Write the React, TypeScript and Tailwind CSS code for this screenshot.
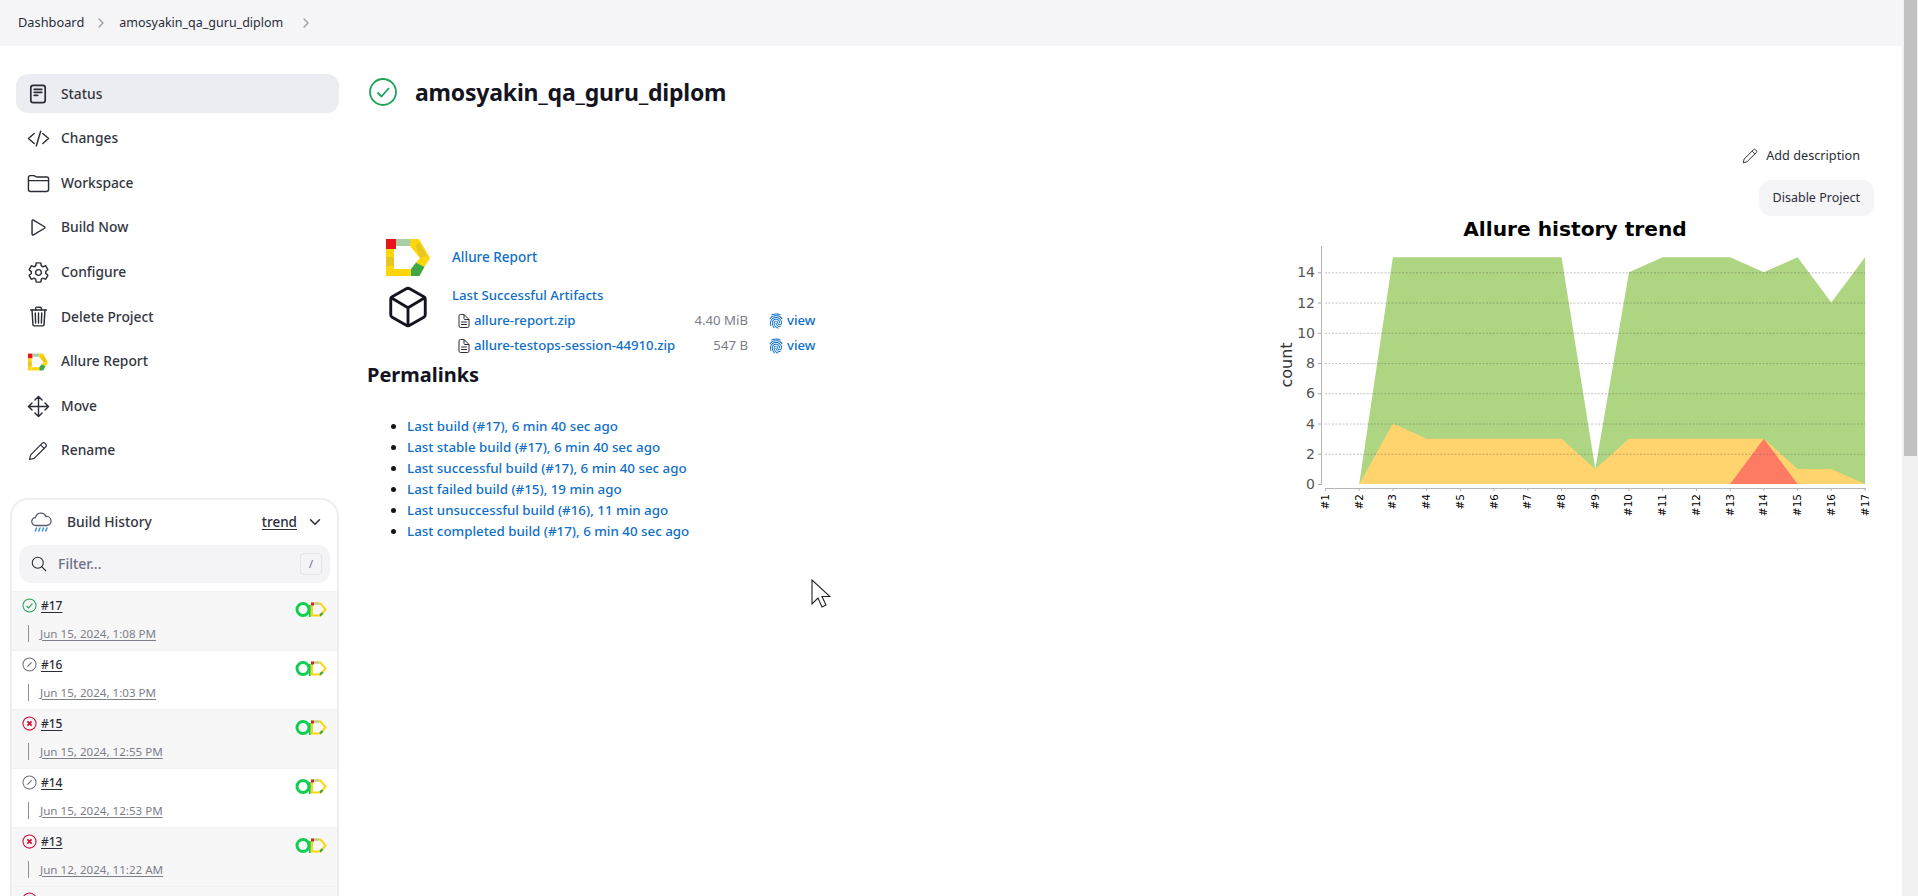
import {
  IoChevronDownOutline,
  IoChevronForwardOutline,
  IoCodeSlashOutline,
  IoCubeOutline,
  IoDocumentTextOutline,
  IoFingerPrint,
  IoFolderOutline,
  IoMoveOutline,
  IoPlayOutline,
  IoSearchOutline,
  IoSettingsOutline,
  IoTrashOutline,
} from 'react-icons/io5';

function StatusDoc() {
  return (
    <svg viewBox="0 0 20 20" className="w-5 h-5 shrink-0" fill="none" stroke="#2a2c37" strokeWidth="1.7" strokeLinecap="round">
      <rect x="2.8" y="1.300" width="14.400" height="17.400" rx="2.400" />
      <path d="M6.200 5.300h7.600M6.200 8.300h7.600M6.200 11.300h3.500" />
    </svg>
  );
}

function Pencil({ className }: { className: string }) {
  return (
    <svg viewBox="0 0 20 20" className={className} fill="none" stroke="#2a2c37" strokeWidth="1.200" strokeLinejoin="round">
      <path d="M1.500 18.500l1.200-4.700L14.300 2.200a1.800 1.800 0 012.600 0l.9.9a1.800 1.800 0 010 2.600L6.200 17.300z" />
      <path d="M12.600 3.900l3.500 3.500" />
    </svg>
  );
}

function AllureLogo({ className }: { className: string }) {
  return (
    <svg viewBox="0 0 44 37" className={className}>
      <path d="M0 10h8v27H0z" fill="#ffd60a" />
      <path d="M0 18h8v9H0z" fill="#e6c620" />
      <path d="M0 0h10v10H0z" fill="#e8141c" />
      <path d="M10 0h15v7H10z" fill="#a9cfa6" />
      <path d="M25 0h8l11 19H34L24 7z" fill="#ffd60a" />
      <path d="M29.500 6l4-2 7.500 13-7 2z" fill="#e6c620" />
      <path d="M34 19h10l-5.500 9-8.500-4.500z" fill="#ffd60a" />
      <path d="M8 30h17v7H8z" fill="#ffd60a" />
      <path d="M30 23.500l8.500 4.500-5 9H25v-7z" fill="#3fa845" />
    </svg>
  );
}

function QaBadge() {
  return (
    <svg viewBox="0 0 32 17" className="w-8 h-[17px]">
      <circle cx="8" cy="8.500" r="6" fill="none" stroke="#0fcf50" strokeWidth="3" />
      <path d="M14.800 4v12" fill="none" stroke="#0fcf50" strokeWidth="1.800" />
      <path d="M17 2.600h8.500l5 5.900-5 5.900H17z" fill="none" stroke="#ffd60a" strokeWidth="2" />
      <path d="M16 1.500h3v3h-3z" fill="#d9261c" />
      <path d="M19 1.600h5v2h-5z" fill="#a9cfa6" />
      <path d="M25.500 15.400l-1.200-2 2.500-2.200 1.700 1.500z" fill="#3fa845" />
    </svg>
  );
}

function BuildIcon({ state }: { state: string }) {
  if (state === 'ok') {
    return (
      <svg viewBox="0 0 16 16" className="w-[15px] h-[15px] shrink-0" fill="none" stroke="#1ea05a" strokeWidth="1.100">
        <circle cx="8" cy="8" r="7" />
        <path d="M4.800 8.300l2.200 2.200 4.200-4.500" strokeWidth="1.200" />
      </svg>
    );
  }
  if (state === 'fail') {
    return (
      <svg viewBox="0 0 16 16" className="w-[15px] h-[15px] shrink-0" fill="none" stroke="#d0103a" strokeWidth="1.200">
        <circle cx="8" cy="8" r="7" />
        <path d="M5.700 5.700l4.600 4.600M10.300 5.700l-4.600 4.600" strokeWidth="1.800" />
      </svg>
    );
  }
  return (
    <svg viewBox="0 0 16 16" className="w-[15px] h-[15px] shrink-0" fill="none" stroke="#6f7180" strokeWidth="1.100">
      <circle cx="8" cy="8" r="7" />
      <path d="M5.800 10.200l4.400-4.400" strokeWidth="1.300" />
    </svg>
  );
}

const navIcon = 'w-[23px] h-[23px] shrink-0';

const navItems = [
  { label: 'Status', icon: <StatusDoc />, active: true },
  { label: 'Changes', icon: <IoCodeSlashOutline className={navIcon} /> },
  { label: 'Workspace', icon: <IoFolderOutline className={navIcon} /> },
  { label: 'Build Now', icon: <IoPlayOutline className={navIcon} /> },
  { label: 'Configure', icon: <IoSettingsOutline className={navIcon} /> },
  { label: 'Delete Project', icon: <IoTrashOutline className={navIcon} /> },
  { label: 'Allure Report', icon: <AllureLogo className="w-5 h-[18px] shrink-0" /> },
  { label: 'Move', icon: <IoMoveOutline className={navIcon} /> },
  { label: 'Rename', icon: <Pencil className="w-5 h-5 shrink-0" /> },
];

const builds = [
  { num: '#17', state: 'ok', date: 'Jun 15, 2024, 1:08 PM' },
  { num: '#16', state: 'aborted', date: 'Jun 15, 2024, 1:03 PM' },
  { num: '#15', state: 'fail', date: 'Jun 15, 2024, 12:55 PM' },
  { num: '#14', state: 'aborted', date: 'Jun 15, 2024, 12:53 PM' },
  { num: '#13', state: 'fail', date: 'Jun 12, 2024, 11:22 AM' },
];

const permalinks = [
  'Last build (#17), 6 min 40 sec ago',
  'Last stable build (#17), 6 min 40 sec ago',
  'Last successful build (#17), 6 min 40 sec ago',
  'Last failed build (#15), 19 min ago',
  'Last unsuccessful build (#16), 11 min ago',
  'Last completed build (#17), 6 min 40 sec ago',
];

const artifacts = [
  { name: 'allure-report.zip', size: '4.40 MiB' },
  { name: 'allure-testops-session-44910.zip', size: '547 B' },
];

// chart values per build, #1 to #17
const totals = [0, 0, 15, 15, 15, 15, 15, 15, 1, 14, 15, 15, 15, 14, 15, 12, 15];
const yellows = [0, 0, 4, 3, 3, 3, 3, 3, 1, 3, 3, 3, 3, 3, 1, 1, 0];
const cx = (i: number) => 1325.5 + i * 33.72;
const cy = (v: number) => 484 - v * 15.12;
const area = (vals: number[], from: number) =>
  `${cx(from)},${cy(0)} ` + vals.slice(from).map((v, i) => `${cx(i + from)},${cy(v)}`).join(' ') + ` ${cx(16)},${cy(0)}`;

function TrendChart() {
  return (
    <svg viewBox="1270 216 610 320" className="w-[610px] h-[320px]" style={{ fontFamily: '"DejaVu Sans", sans-serif' }}>
      <text x="1575" y="236" textAnchor="middle" fontSize="20.200" fontWeight="700" fill="#000">
        Allure history trend
      </text>
      <polygon points={area(totals, 1)} fill="#aed581" />
      <polygon points={area(yellows, 1)} fill="#ffd36e" />
      <polygon points={`${cx(12)},${cy(0)} ${cx(13)},${cy(3)} ${cx(14)},${cy(0)}`} fill="#fe7b63" />
      {[0, 2, 4, 6, 8, 10, 12, 14].map((v) => (
        <g key={v}>
          {v > 0 && (
            <line x1="1325" x2="1865" y1={cy(v) + 0.5} y2={cy(v) + 0.5} stroke="#555" strokeOpacity="0.35" strokeDasharray="2 1.500" />
          )}
          <line x1="1318" x2="1321" y1={cy(v) + 0.5} y2={cy(v) + 0.5} stroke="#aaa" />
          <text x="1315" y={cy(v) + 5} textAnchor="end" fontSize="14" fill="#555">
            {v}
          </text>
        </g>
      ))}
      <line x1="1321.500" x2="1321.500" y1="246" y2="485" stroke="#b5b5b5" />
      <line x1="1325" x2="1866" y1="488.500" y2="488.500" stroke="#b5b5b5" />
      <text transform="translate(1292 365) rotate(-90)" textAnchor="middle" fontSize="16" fill="#333">
        count
      </text>
      {totals.map((_, i) => (
        <g key={i}>
          <line x1={cx(i)} x2={cx(i)} y1="488" y2="491" stroke="#b5b5b5" />
          <text transform={`translate(${cx(i) + 3.500} 494) rotate(-90)`} textAnchor="end" fontSize="10.500" fill="#000">
            {'#' + (i + 1)}
          </text>
        </g>
      ))}
    </svg>
  );
}

function CursorArrow() {
  return (
    <svg viewBox="0 0 20 30" className="absolute left-[811px] top-[579px] w-5 h-[30px]" fill="#fff" stroke="#222" strokeWidth="1.100">
      <path d="M1 1v24l6-6 4 9 4-2-4-8.500h8z" />
    </svg>
  );
}

export default function App() {
  return (
    <div
      className="relative flex h-[896px] overflow-hidden bg-white text-[14px] text-[#2a2c37]"
      style={{ fontFamily: '"Noto Sans", sans-serif' }}
    >
      <div className="flex flex-col flex-1 min-w-0">
        <header className="h-[46px] bg-[#f5f5f7] flex items-center pl-[18px] text-[12.800px]">
          <span>Dashboard</span>
          <IoChevronForwardOutline className="w-3.5 h-3.5 ml-[10px] mr-[11px] text-[#9a9ba5]" />
          <span className="text-[12.500px]">amosyakin_qa_guru_diplom</span>
          <IoChevronForwardOutline className="w-3.5 h-3.5 ml-[16px] text-[#9a9ba5]" />
        </header>

        <div className="flex flex-1 min-h-0">
          {/* Side panel */}
          <aside className="w-[368px] shrink-0 pt-[28px]">
            <nav className="flex flex-col gap-[5.600px] ml-[16px] w-[323px]">
              {navItems.map((item) => (
                <div
                  key={item.label}
                  className={`flex items-center h-[39px] rounded-[12px] pl-[12px] pt-px gap-[13px] ${item.active ? 'bg-[#ecedf2]' : ''}`}
                >
                  <span className="w-5 flex justify-center">{item.icon}</span>
                  <span className="font-medium text-[13.800px] text-[#34363f]">{item.label}</span>
                </div>
              ))}
            </nav>

            <section className="mt-[28px] ml-[10px] w-[329px] border-2 border-[#eeeef1] rounded-t-[18px] pb-4">
              <div className="flex items-center h-[45px] pl-[17px] pr-[14px]">
                <svg viewBox="0 0 24 24" className="w-[24px] h-[24px]" fill="none" strokeWidth="1.300" strokeLinecap="round">
                  <path d="M7 15.500a4 4 0 01-.5-8 5.500 5.500 0 0110.500-1 4.500 4.500 0 011 9z" stroke="#555a66" fill="#fff" />
                  <path d="M7.500 18l-1.200 3M11 18l-1.200 3M14.500 18l-1.200 3M18 18l-1.200 3" stroke="#3a8fd8" strokeWidth="1.500" />
                </svg>
                <span className="ml-[14px] font-medium text-[13.800px] text-[#34363f]">Build History</span>
                <span className="ml-auto underline underline-offset-2 font-medium text-[13.500px]">trend</span>
                <IoChevronDownOutline className="w-4 h-4 ml-[10px]" />
              </div>
              <div className="mx-[7px] mb-[8px] h-[38px] bg-[#f4f4f7] rounded-[12px] flex items-center pl-[11px] pr-[8px]">
                <IoSearchOutline className="w-[18px] h-[18px]" />
                <span className="ml-[10px] font-medium text-[#6c6f85]">Filter...</span>
                <span className="ml-auto w-[22px] h-[22px] border border-[#e2e2e7] rounded-[4px] flex items-center justify-center text-[11px] text-[#6c6f85]">
                  /
                </span>
              </div>
              {builds.map((b, i) => (
                <div key={b.num} className={`flex justify-between h-[59px] border-t border-[#f2f2f4] ${i % 2 === 0 ? 'bg-[#f7f7f8]' : 'bg-white'}`}>
                  <div>
                    <div className="flex items-center gap-[4px] h-[18px] mt-[5px] pl-[10px] text-[12px]">
                      <BuildIcon state={b.state} />
                      <span className="underline underline-offset-2 font-medium">{b.num}</span>
                    </div>
                    <div className="flex items-center mt-[10px] ml-[16px] h-[17px] border-l border-[#8d8f99] pl-[11px] text-[11.600px] text-[#7c7e88]">
                      <span className="underline underline-offset-2">{b.date}</span>
                    </div>
                  </div>
                  <div className="mt-[9px] mr-[10px]">
                    <QaBadge />
                  </div>
                </div>
              ))}
              <div className="h-[59px] border-t border-[#f2f2f4] bg-[#f7f7f8] pl-[10px] pt-[5px]">
                <BuildIcon state="fail" />
              </div>
            </section>
          </aside>

          {/* Main content */}
          <main className="flex-1 min-w-0 pt-[26px] pr-[22px]">
            <div className="flex items-center h-[39px] gap-[18px]">
              <svg viewBox="0 0 28 28" className="w-7 h-7 ml-px" fill="none" stroke="#1ea35a" strokeWidth="1.800">
                <circle cx="14" cy="14" r="13" />
                <path d="M8.500 14.500l4 4 7.500-8.500" strokeWidth="1.800" />
              </svg>
              <h1 className="text-[23px] font-bold text-[#14141f] tracking-[-0.2px] pt-px">amosyakin_qa_guru_diplom</h1>
            </div>

            <div className="flex justify-between mt-[29px]">
              <div className="pt-[97px] w-[520px]">
                <div className="flex items-center h-[40px] pl-[18px]">
                  <AllureLogo className="w-[44px] h-[37px]" />
                  <span className="ml-[22px] font-medium text-[13.500px] text-[#0f6fc6]">Allure Report</span>
                </div>
                <div className="flex mt-[7px] pl-[17px] text-[13.200px] font-medium text-[#0f6fc6]">
                  <IoCubeOutline className="w-[46px] h-[46px] shrink-0 text-[#14141f]" />
                  <div className="ml-[21px] pt-[2px]">
                    <div className="h-[18px] leading-[18px]">Last Successful Artifacts</div>
                    <div className="mt-[4px] flex flex-col">
                      {artifacts.map((a) => (
                        <div key={a.name} className="flex items-center h-[25px] whitespace-nowrap">
                          <IoDocumentTextOutline className="w-4 h-4 ml-[4px] shrink-0 text-[#2a2c37]" />
                          <span className="ml-[2px] w-[202px] shrink-0">{a.name}</span>
                          <span className="w-[72px] text-right font-normal text-[#7c7e88] shrink-0">{a.size}</span>
                          <IoFingerPrint className="w-4 h-4 ml-[20px] shrink-0" />
                          <span className="ml-[3px]">view</span>
                        </div>
                      ))}
                    </div>
                  </div>
                </div>
                <h2 className="text-[20px] font-bold text-[#14141f] leading-[26px] -ml-px mt-[4px]">Permalinks</h2>
                <ul className="list-disc pl-[39px] mt-[28px] text-[13.350px] font-medium text-[#0f6fc6] marker:text-[#14141f]">
                  {permalinks.map((p) => (
                    <li key={p} className="h-[21px] leading-[21px]">
                      {p}
                    </li>
                  ))}
                </ul>
              </div>

              <div className="flex flex-col items-end">
                <div className="flex items-center h-[32px] mr-[20px] gap-[8px] text-[12.700px]">
                  <Pencil className="w-4 h-4" />
                  <span>Add description</span>
                </div>
                <div className="mt-[8px] mr-[6px] h-[36px] px-[14px] rounded-[12px] bg-[#f5f5f7] flex items-center text-[12.500px]">
                  Disable Project
                </div>
                <TrendChart />
              </div>
            </div>
          </main>
        </div>
      </div>

      {/* Browser scrollbar */}
      <div className="w-4 shrink-0 bg-[#f1f1f1] pl-0.5">
        <div className="h-[456px] w-[13px] bg-[#c1c1c1]" />
      </div>

      <CursorArrow />
    </div>
  );
}
